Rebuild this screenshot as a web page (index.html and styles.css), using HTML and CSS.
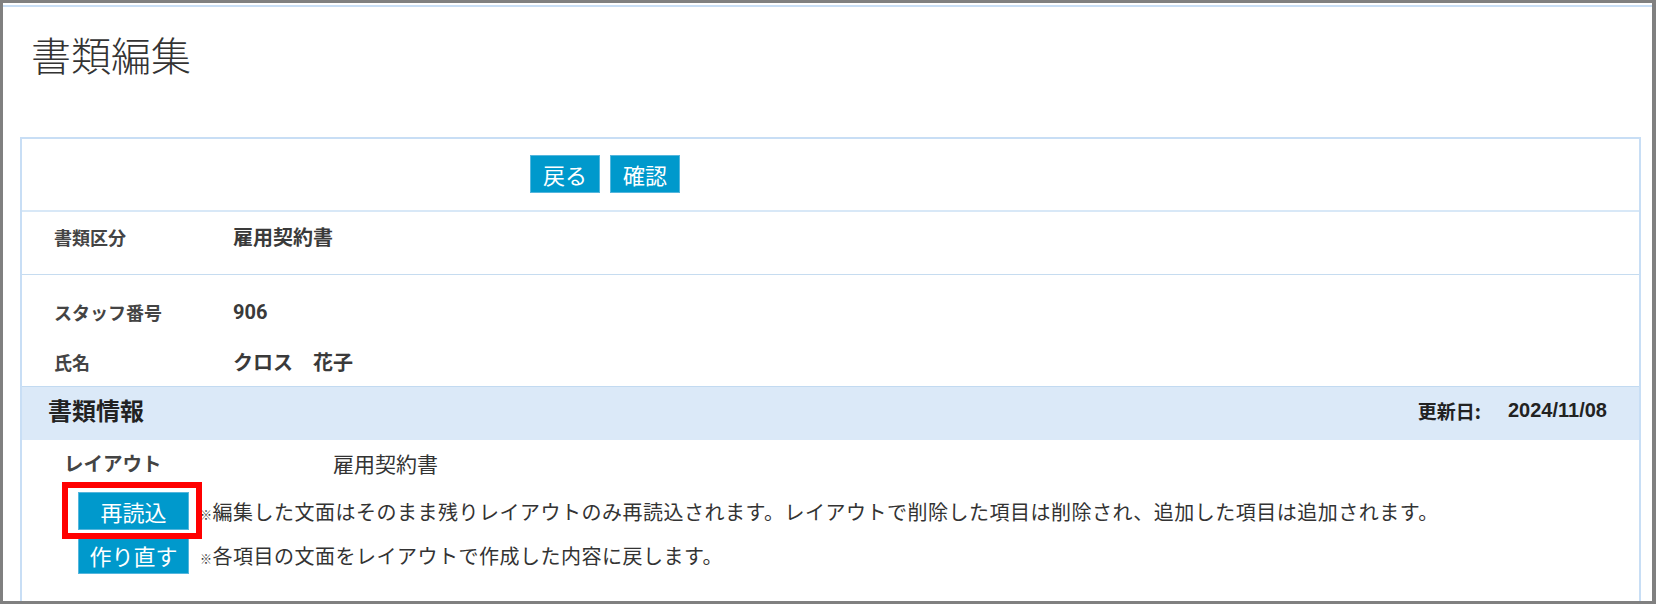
FILE: index.html
```html
<!DOCTYPE html>
<html lang="ja">

<head>
  <meta charset="UTF-8" />
  <title>書類編集</title>
  <link rel="stylesheet" href="styles.css">
</head>

<body>
  <div class="frame">
    <div class="inner">
      <h1 class="page-title">書類編集</h1>

      <div class="panel">
        <div class="action-bar">
          <button class="btn">戻る</button>
          <button class="btn">確認</button>
        </div>

        <div class="info-row doc-type">
          <span class="label">書類区分</span>
          <span class="value">雇用契約書</span>
        </div>

        <div class="staff-block">
          <div class="info-row">
            <span class="label">スタッフ番号</span>
            <span class="value num">906</span>
          </div>
          <div class="info-row">
            <span class="label">氏名</span>
            <span class="value">クロス　花子</span>
          </div>
        </div>

        <div class="section-head">
          <h2>書類情報</h2>
          <div class="updated">
            <span class="updated-label">更新日:</span>
            <span class="updated-date">2024/11/08</span>
          </div>
        </div>

        <div class="layout-block">
          <div class="layout-row">
            <span class="layout-label">レイアウト</span>
            <span class="layout-value">雇用契約書</span>
          </div>
          <div class="tool-row">
            <span class="highlight-wrap">
              <button class="btn btn-wide">再読込</button>
              <span class="highlight"></span>
            </span>
            <p class="note"><small>※</small>編集した文面はそのまま残りレイアウトのみ再読込されます。レイアウトで削除した項目は削除され、追加した項目は追加されます。</p>
          </div>
          <div class="tool-row">
            <button class="btn btn-wide">作り直す</button>
            <p class="note"><small>※</small>各項目の文面をレイアウトで作成した内容に戻します。</p>
          </div>
        </div>
      </div>
    </div>
  </div>
</body>

</html>
```

FILE: styles.css
```css
* {
  box-sizing: border-box;
  margin: 0;
  padding: 0;
}

body {
  font-family: 'Noto Sans CJK JP', 'Noto Sans', sans-serif;
  color: #333;
  background: #fff;
  overflow: hidden;
}

.frame {
  height: 604px;
  border: 3px solid #808080;
  border-right-width: 4px;
  padding-top: 2px;
  overflow: hidden;
}

.inner {
  height: 100%;
  border-top: 2px solid #c8def5;
}

.page-title {
  font-size: 40px;
  font-weight: 300;
  line-height: 48px;
  color: #333;
  margin: 23px 0 59px 28px;
}

.panel {
  margin: 0 11px 0 17px;
  border: 2px solid #c8def5;
  border-bottom: none;
  height: 500px;
}

/* buttons */

.btn {
  font-family: 'Noto Sans CJK JP', sans-serif;
  font-size: 22px;
  line-height: 36px;
  height: 38px;
  min-width: 70px;
  padding: 0 12px;
  color: #fff;
  background-color: #0099cc;
  border: 1px solid #55b6dd;
  cursor: pointer;
}

.btn-wide {
  width: 111px;
  padding: 0;
}

.action-bar {
  display: flex;
  gap: 10px;
  padding: 16px 0 17px 508px;
  border-bottom: 2px solid #d8e8f7;
}

/* info rows */

.info-row {
  display: flex;
  align-items: center;
  padding-left: 32px;
  line-height: 22px;
}

.info-row .label {
  width: 179px;
  font-size: 18px;
  font-weight: 700;
  color: #444;
}

.info-row .value {
  font-size: 20px;
  font-weight: 700;
  color: #3a3a3a;
}

.info-row .num {
  font-family: 'Roboto', 'Liberation Sans', sans-serif;
}

.doc-type {
  padding-top: 14px;
  padding-bottom: 26px;
  border-bottom: 1px solid #c6dcf0;
}

.staff-block {
  display: flex;
  flex-direction: column;
  gap: 28px;
  padding: 26px 0 13px;
}

/* section header */

.section-head {
  display: flex;
  justify-content: space-between;
  align-items: center;
  padding: 8px 32px 15px 26px;
  background-color: #dbe9f8;
  border-top: 1px solid #c2daf1;
}

.section-head h2 {
  font-size: 24px;
  font-weight: 700;
  line-height: 30px;
  color: #222;
}

.updated {
  display: flex;
  align-items: center;
}

.updated-label {
  font-size: 19px;
  font-weight: 700;
  color: #222;
  margin-right: 27px;
}

.updated-date {
  font-family: 'Liberation Sans', sans-serif;
  font-size: 20px;
  font-weight: 700;
  color: #222;
}

/* layout block */

.layout-block {
  padding: 10px 0 0 42px;
}

.layout-row {
  display: flex;
  align-items: center;
  line-height: 26px;
  margin-bottom: 16px;
}

.layout-label {
  width: 269px;
  font-size: 19.5px;
  font-weight: 700;
  color: #444;
}

.layout-value {
  font-size: 21px;
  color: #333;
}

.tool-row {
  display: flex;
  align-items: center;
  gap: 11px;
  padding-left: 14px;
  margin-bottom: 6px;
}

.note {
  font-size: 20px;
  letter-spacing: 0.5px;
  color: #333;
  white-space: nowrap;
}

.note small {
  font-size: 12px;
}

.highlight-wrap {
  position: relative;
  display: inline-block;
  height: 38px;
}

.highlight {
  position: absolute;
  top: -10px;
  left: -16px;
  right: -13px;
  bottom: -9px;
  border: 6px solid #f00;
}
```
